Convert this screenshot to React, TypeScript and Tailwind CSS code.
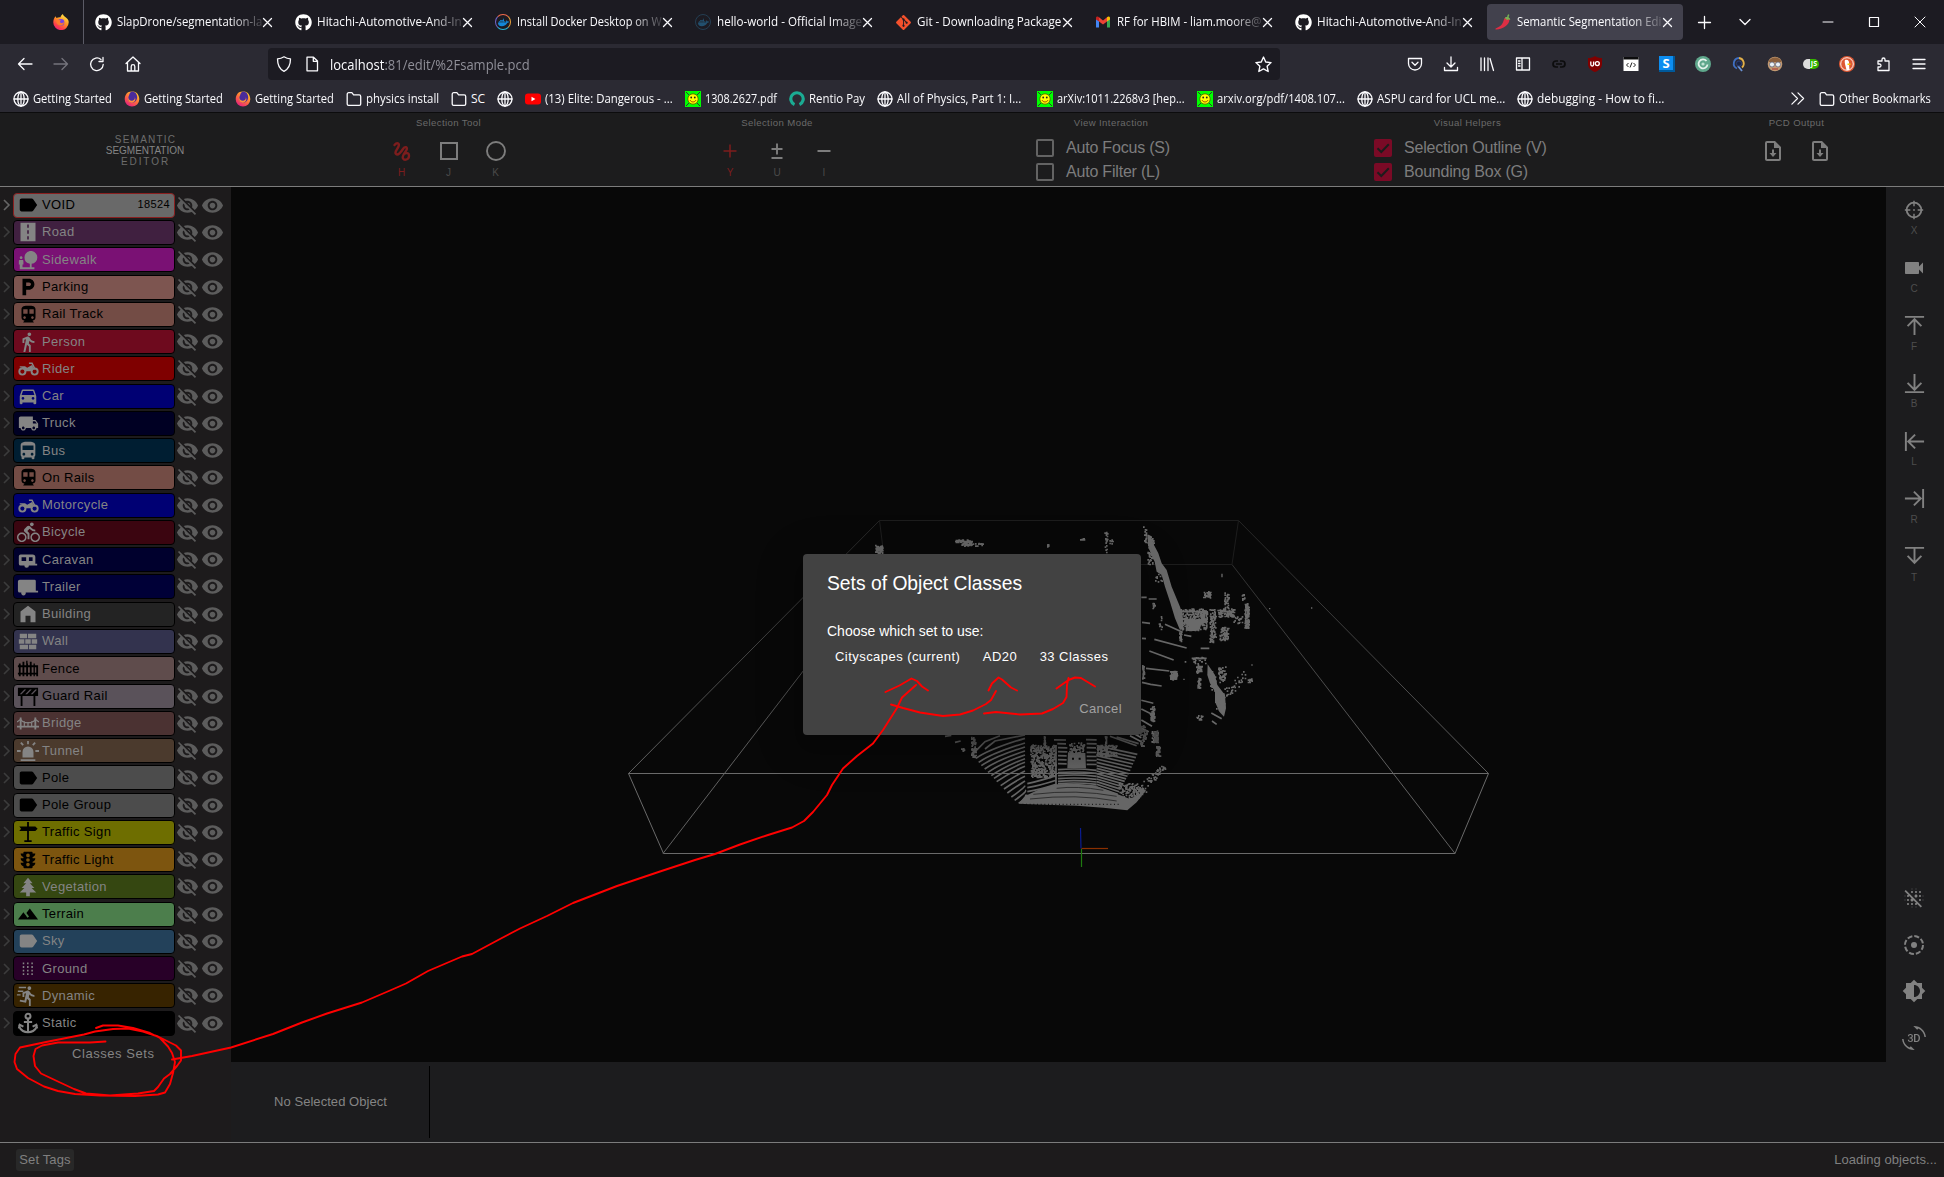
import React, { useLayoutEffect, useRef, useState } from 'react';
import { FaGithub, FaGitAlt, FaDocker } from 'react-icons/fa';
import {
  MdLabel, MdNaturePeople, MdLocalParking, MdDirectionsSubway, MdDirectionsWalk, MdDirectionsCar,
  MdLocalShipping, MdDirectionsBus, MdDirectionsBike, MdTraffic, MdTerrain, MdVisibility, MdVisibilityOff,
  MdVideocam, MdBlurOff, MdBrightness6, Md3dRotation, MdDirectionsRun,
} from 'react-icons/md';

/* ---------- helpers ---------- */

/** Text condensed horizontally to an exact width. */
function Fit({ w, children, className = '' }: { w: number; children: React.ReactNode; className?: string }) {
  const ref = useRef<HTMLSpanElement>(null);
  const [scale, setScale] = useState(1);
  useLayoutEffect(() => {
    if (ref.current) setScale(w / ref.current.offsetWidth);
  }, [w]);
  return (
    <span className={`block shrink-0 ${className}`} style={{ width: w }}>
      <span ref={ref} className="inline-block origin-left whitespace-nowrap" style={{ transform: `scaleX(${scale})` }}>
        {children}
      </span>
    </span>
  );
}

type IconProps = { className?: string; children?: React.ReactNode; box?: string };
const Solid = ({ className = 'size-5', children, box = '0 0 24 24' }: IconProps) => (
  <svg viewBox={box} className={`${className} shrink-0`} fill="currentColor">{children}</svg>
);
const Line = ({ className = 'size-4', children, box = '0 0 16 16' }: IconProps) => (
  <svg viewBox={box} className={`${className} shrink-0`} fill="none" stroke="currentColor" strokeWidth="1.3" strokeLinecap="round" strokeLinejoin="round">
    {children}
  </svg>
);

/* ---------- browser icons ---------- */

const Firefox = () => (
  <svg viewBox="0 0 16 16" className="size-4 shrink-0">
    <defs>
      <linearGradient id="ff" x1="0.8" y1="0" x2="0.2" y2="1">
        <stop offset="0" stopColor="#fff44f" />
        <stop offset="0.45" stopColor="#ff9024" />
        <stop offset="0.8" stopColor="#ff3750" />
        <stop offset="1" stopColor="#e0208a" />
      </linearGradient>
    </defs>
    <path d="M15.3 6.2C14.6 4.2 12.6 3.6 11 2 10.3 1.2 10 .6 9.9 0 8.6 .8 7.7 2.1 7.6 3.2 6 3 4.7 3.3 3.6 3.9 3.1 3.4 2.9 2.8 2.9 2.2 1.2 3.4 .3 5.8 .3 8.3A7.7 7.7 0 0 0 15.7 8.5c0-.8-.1-1.6-.4-2.3z" fill="url(#ff)" />
    <circle cx="8" cy="8.4" r="3.3" fill="#7543e3" />
    <path d="M3.5 6c1.5-.8 3 .2 4.500.5-1.300.5-1.400 1.600-.4 2.300 1.200.8 3 .2 3.500-1-.1 3-2.600 4.400-4.800 3.600C4 10.600 3 8.500 3.500 6z" fill="#ff7a2c" />
  </svg>
);
const FirefoxMark = () => (
  <svg viewBox="0 0 16 16" className="size-4 shrink-0">
    <defs>
      <linearGradient id="fm" x1="0.8" y1="0" x2="0.2" y2="1">
        <stop offset="0.1" stopColor="#ffbd2e" />
        <stop offset="0.5" stopColor="#ff7139" />
        <stop offset="1" stopColor="#e31587" />
      </linearGradient>
    </defs>
    <path d="M4 1.200C2 2.500.7 5.200.7 8.300a7.300 7.300 0 0 0 14.600 0c0-2.500-1-5-2.800-6.500C10.500.2 7 0 4 1.200z" fill="url(#fm)" />
    <path d="M5 4.500C5.500 2.500 6.500 1 8 .6c3 0 5.200 2.400 5.200 5.600 0 3-2.200 5.300-5 5.300S3.800 9.500 4.200 7c.1-1 .4-1.800.8-2.500z" fill="#4a2b9b" />
    <path d="M4.500 6c-.3 2.500 1.500 4 3.700 3.800 2-.2 3-1.800 2.600-3.500 1.500 2.500-.3 5.400-3 5.400-2.500 0-4.500-2.200-3.300-5.700z" fill="#ff8f3a" />
  </svg>
);
const Globe = () => (
  <Line><circle cx="8" cy="8" r="7" /><ellipse cx="8" cy="8" rx="3.2" ry="7" /><path d="M1 8h14M8 1v14" /></Line>
);
const Folder = () => (
  <Line><path d="M1.200 13V3.200c0-.9.6-1.500 1.500-1.500h3.200L7.600 3.900h5.600c.9 0 1.500.6 1.500 1.500V13c0 .8-.6 1.300-1.400 1.300H2.600c-.8 0-1.400-.5-1.400-1.300z" /></Line>
);
const YouTube = () => (
  <svg viewBox="0 0 16 16" className="size-4 shrink-0"><rect x="0" y="2.5" width="16" height="11" rx="3" fill="#f00" /><path d="M6.500 5.700v4.600L10.400 8z" fill="#fff" /></svg>
);
const Smiley = () => (
  <svg viewBox="0 0 16 16" className="size-4 shrink-0">
    <rect width="16" height="16" fill="#0f0" />
    <path d="M1 1l3 3M15 1l-3 3M1 15l3-3M15 15l-3-3" stroke="#333" strokeWidth="1" />
    <circle cx="8" cy="8" r="5.2" fill="#ff0" stroke="#555500" strokeWidth="0.8" />
    <circle cx="6.2" cy="6.5" r="0.9" fill="#222" /><circle cx="9.8" cy="6.5" r="0.9" fill="#222" />
    <path d="M5 9c1 2.600 5 2.600 6 0" stroke="#a40" fill="none" />
  </svg>
);
const Rentio = () => (
  <svg viewBox="0 0 16 16" className="size-4 shrink-0"><path d="M5.500 13.600A6.200 6.200 0 1 1 10.500 13.600" fill="none" stroke="#1bab93" strokeWidth="3.2" /></svg>
);
const Github = () => <FaGithub className="size-[17px] shrink-0 text-white" />;
const Docker = ({ dim }: { dim?: boolean }) => (
  <span className={`flex size-4 shrink-0 items-center justify-center rounded-full border ${dim ? 'border-[#243e52] text-[#22506e]' : 'border-t-[#f26a4b] border-r-[#e9a13b] border-b-[#29b6d8] border-l-[#7467c9] text-[#1488d8]'}`}>
    <FaDocker className="size-[11px]" />
  </span>
);
const Gmail = () => (
  <svg viewBox="0 0 16 16" className="size-4 shrink-0">
    <path d="M1 4v9.500h3V7z" fill="#4285f4" /><path d="M15 4v9.500h-3V7z" fill="#34a853" />
    <path d="M4 3.200L8 6.500l4-3.300V7.500L8 10.500 4 7.500z" fill="#ea4335" />
    <path d="M1 4c0-1.500 1.700-2 3-.8v4.300L1 5.500z" fill="#c5221f" /><path d="M15 4c0-1.500-1.700-2-3-.8v4.300l3-2z" fill="#fbbc04" />
  </svg>
);
const Chili = () => (
  <svg viewBox="0 0 16 16" className="size-4 shrink-0">
    <path d="M10.300 3.500c1.800-1 4 .3 4.100 2.300.1 4.500-6 9.700-13.300 9.800-.9-.1-.8-1.100 0-1.400C5 13 6.800 11 8 8.300c.8-1.800.8-3.600 2.300-4.800z" fill="#dd2e44" />
    <path d="M9.600 4.600c.6-1.300 1.700-1.700 2.600-1.500C12.300 2 12.500 1 13.300.3l1.200.7c-.7.7-.9 1.500-.8 2.400 1.200.5 1.600 1.500 1.400 2.700l-1.600-.8-1.600 1-.8-1.600z" fill="#77b255" />
  </svg>
);
const Close = () => <Line className="size-[11px]" box="0 0 11 11"><path d="M1.500 1.500l8 8M9.500 1.500l-8 8" /></Line>;

const tabs = [
  { icon: <Github />, t: 'SlapDrone/segmentation-la', w: 145 },
  { icon: <Github />, t: 'Hitachi-Automotive-And-In', w: 145 },
  { icon: <Docker />, t: 'Install Docker Desktop on W', w: 145 },
  { icon: <Docker dim />, t: 'hello-world - Official Image', w: 145 },
  { icon: <FaGitAlt className="size-[17px] shrink-0 text-[#f4512c]" />, t: 'Git - Downloading Package', w: 144, clear: true },
  { icon: <Gmail />, t: 'RF for HBIM - liam.moore@', w: 144 },
  { icon: <Github />, t: 'Hitachi-Automotive-And-In', w: 145 },
  { icon: <Chili />, t: 'Semantic Segmentation Edi', w: 144, active: true },
];

function TabStrip() {
  return (
    <div className="flex h-11 shrink-0 items-center bg-[#1c1b22] text-[13px] text-[#fbfbfe]">
      <div className="flex h-full w-[84px] shrink-0 items-center justify-end border-r border-[#5b5b66] pr-[14px]"><Firefox /></div>
      <div className="flex h-full pl-px">
        {tabs.map((tab, i) => (
          <div key={i} className="flex h-full w-[200px] items-center px-[2px]">
            <div className={`flex h-9 w-full items-center rounded-[4px] pl-2 ${tab.active ? 'bg-[#42414d]' : ''}`}>
              <span className="flex w-[22px] shrink-0 items-center">{tab.icon}</span>
              <div className={`w-[145px] ${tab.clear ? '' : '[mask-image:linear-gradient(to_right,#000_78%,rgba(0,0,0,0.15)_100%)]'}`}>
                <Fit w={tab.w}>{tab.t}</Fit>
              </div>
              <Close />
            </div>
          </div>
        ))}
      </div>
      <div className="flex w-[79px] justify-between pl-[12px] pr-[12px]">
        <Line className="size-[15px]" box="0 0 15 15"><path d="M7.500 1.500v12M1.500 7.500h12" /></Line>
        <Line className="size-[14px]" box="0 0 14 14"><path d="M2 4.500l5 5 5-5" /></Line>
      </div>
      <div className="ml-auto flex gap-[34px] pr-[18px]">
        <Line className="size-3" box="0 0 12 12"><path d="M1 6h10" strokeWidth="1" /></Line>
        <Line className="size-3" box="0 0 12 12"><path d="M1.500 1.500h9v9h-9z" strokeWidth="1.2" /></Line>
        <Line className="size-3" box="0 0 12 12"><path d="M1 1l10 10M11 1L1 11" strokeWidth="1" /></Line>
      </div>
    </div>
  );
}

const extensions = [
  <Line><path d="M1.500 2.500h13V7.500a6.500 6.500 0 0 1-13 0zM5 6.300l3 3 3-3" /></Line>,
  <Line><path d="M8 1v9.500M4 7l4 4 4-4M1.500 11.500v3h13v-3" /></Line>,
  <Line><path d="M2 2v12.500M5.500 2v12.500M9 2v12.500M11 2.500l3.500 12" /></Line>,
  <Line><path d="M1.500 2h13v12h-13zM7 2v12M3.500 5h1.500M3.500 7.500h1.500M3.500 10h1.500" /></Line>,
  <svg viewBox="0 0 16 16" className="size-4 text-[#0c0c0d]" fill="none" stroke="currentColor" strokeWidth="1.7"><path d="M7 5H5a3 3 0 0 0 0 6h2M9 5h2a3 3 0 0 1 0 6H9M5 8h6" /></svg>,
  <svg viewBox="0 0 16 16" className="size-4"><path d="M8 0c2 1.500 4 2 7 2v6c0 4-3 6.500-7 8-4-1.500-7-4-7-8V2c3 0 5-.5 7-2z" fill="#800000" /><path d="M3.800 5.500v3c0 2 2.800 2 2.800 0v-3" stroke="#fff" strokeWidth="1.3" fill="none" /><circle cx="10.3" cy="7.6" r="2" stroke="#fff" strokeWidth="1.3" fill="none" /></svg>,
  <svg viewBox="0 0 16 16" className="size-4"><rect x="0.5" y="1" width="15" height="14" fill="#fff" /><path d="M.5 1h15v2.500H.5z" fill="#0c0c0d" /><path d="M5.500 7L3.500 9l2 2M10.500 7l2 2-2 2M9 6.500l-2 5" stroke="#222" fill="none" /></svg>,
  <span className="flex size-4 items-center justify-center border-r-2 border-b-2 border-[#00599b] bg-[#0d8df0] text-[13px] font-bold leading-none text-white">S</span>,
  <svg viewBox="0 0 16 16" className="size-4"><circle cx="8" cy="8" r="8" fill="#5fa78c" /><path d="M11.500 5A4.500 4.500 0 1 0 12.500 8.500" stroke="#e6f4ee" strokeWidth="1.8" fill="none" /><circle cx="8" cy="8" r="1.6" fill="#bfe3d3" /></svg>,
  <svg viewBox="0 0 16 16" className="size-4" fill="none" strokeWidth="1.8"><path d="M8 2a5.500 5.500 0 0 0-2 10.500" stroke="#3f6fc2" /><path d="M8 2a5.500 5.500 0 0 1 3 9.500" stroke="#e2b04a" /><path d="M7 10l4 5" stroke="#6b93d6" /><circle cx="8" cy="7.5" r="2.5" fill="#1a2340" stroke="#2a3d77" strokeWidth="1" /></svg>,
  <svg viewBox="0 0 16 16" className="size-4"><circle cx="8" cy="8" r="7.3" fill="#c39a72" /><path d="M1.500 6C3 0 13 0 14.500 6z" fill="#8a5f3c" /><circle cx="5" cy="8.5" r="2.5" fill="#e8f0f5" stroke="#667" strokeWidth="0.8" /><circle cx="11" cy="8.5" r="2.5" fill="#e8f0f5" stroke="#667" strokeWidth="0.8" /><path d="M5 13h6" stroke="#a33" /></svg>,
  <span className="flex size-4 items-center"><span className="flex h-[10px] w-4 items-center justify-end rounded-full bg-linear-to-r from-[#ddd] from-45% to-[#35b500] to-45% pr-[2px] text-[7px] font-bold text-white">JS</span></span>,
  <svg viewBox="0 0 16 16" className="size-4"><circle cx="8" cy="8" r="8" fill="#de5833" /><circle cx="8" cy="8" r="6.3" fill="none" stroke="#fff" strokeWidth="0.9" /><path d="M6 4c3-1 4.500 1 4 4 0 2 .5 4 .5 6H7.500C7 11 5 6 6 4z" fill="#fff" /><path d="M8.500 7.500h3v1.500h-3z" fill="#fc0" /></svg>,
  <Line><path d="M3 14.500V11h1.500a1.500 1.500 0 0 0 0-3H3V5h4V3.500a1.500 1.500 0 0 1 3 0V5h4v9.500z" /></Line>,
  <Line><path d="M2 3.500h12M2 8h12M2 12.500h12" /></Line>,
];

function NavBar() {
  return (
    <div className="flex h-10 shrink-0 items-center text-[15px] text-[#fbfbfe]">
      <div className="flex w-[268px] items-center gap-5 pl-[17px]">
        <Line><path d="M15 8H1.500M7 2.500L1.500 8 7 13.500" /></Line>
        <Line className="size-4 text-[#75747d]"><path d="M1 8h13.500M9 2.500L14.500 8 9 13.500" /></Line>
        <Line><path d="M14.200 8.500A6.300 6.300 0 1 1 12 3.500M14 1.500v4h-4" /></Line>
        <Line><path d="M1 7.500L8 1l7 6.500M2.500 6.500V15h11V6.500M6.200 15v-4.500a1.800 1.800 0 0 1 3.600 0V15" /></Line>
      </div>
      <div className="flex h-8 w-[1012px] items-center rounded-[4px] bg-[#1c1b22] px-2">
        <Line><path d="M8 .8c2 1.400 4 2 6.500 2C14.500 9 13 13 8 15.300 3 13 1.500 9 1.500 2.800c2.500 0 4.500-.6 6.500-2z" /></Line>
        <span className="ml-3 flex"><Line><path d="M3 1.200h6.500L13.500 5v9.800H3zM9.300 1.500V5.300H13.300" /></Line></span>
        <Fit w={200} className="ml-[10px]"><span>localhost</span><span className="text-[#8f8f98]">:81/edit/%2Fsample.pcd</span></Fit>
        <span className="ml-auto"><Line className="size-[17px]"><path d="M8 1l2.100 4.600 5 .6-3.700 3.400 1 5L8 12.200l-4.400 2.400 1-5L.9 6.200l5-.6z" /></Line></span>
      </div>
      <div className="ml-auto flex gap-5 pr-[17px]">{extensions.map((e, i) => <span key={i} className="flex size-4 items-center justify-center">{e}</span>)}</div>
    </div>
  );
}

const bookmarks: [React.ReactNode, string, number][] = [
  [<Globe />, 'Getting Started', 79], [<FirefoxMark />, 'Getting Started', 79], [<FirefoxMark />, 'Getting Started', 79],
  [<Folder />, 'physics install', 73], [<Folder />, 'SC', 14], [<Globe />, '', 0],
  [<YouTube />, '(13) Elite: Dangerous - ...', 128], [<Smiley />, '1308.2627.pdf', 72], [<Rentio />, 'Rentio Pay', 56],
  [<Globe />, 'All of Physics, Part 1: I...', 124], [<Smiley />, 'arXiv:1011.2268v3 [hep...', 128],
  [<Smiley />, 'arxiv.org/pdf/1408.107...', 128], [<Globe />, 'ASPU card for UCL me...', 128], [<Globe />, 'debugging - How to fi...', 127],
];

function Bookmarks() {
  return (
    <div className="flex h-7 shrink-0 items-center pl-[13px] pt-px text-[12px] text-[#fbfbfe]">
      <div className="flex items-center gap-3">
        {bookmarks.map(([icon, t, w], i) => (
          <div key={i} className={`flex items-center gap-1 ${w === 124 ? 'pr-1' : ''}`}>{icon}{t && <Fit w={w}>{t}</Fit>}</div>
        ))}
      </div>
      <div className="ml-auto flex items-center pr-[13px]">
        <Line className="size-[15px] mr-[14px]"><path d="M2 2l6 6-6 6M8.500 2l6 6-6 6" /></Line>
        <Folder />
        <Fit w={92} className="ml-1">Other Bookmarks</Fit>
      </div>
    </div>
  );
}

/* ---------- editor header ---------- */

const Group = ({ title, width, children }: { title: string; width: string; children: React.ReactNode }) => (
  <div className={`flex shrink-0 flex-col items-center ${width}`}>
    <div className="h-[20px] pt-[3px] text-[9.6px] leading-[14px] tracking-[0.4px] text-[#6a6a6a]">{title}</div>
    {children}
  </div>
);
const Tool = ({ k, red, children }: { k: string; red?: boolean; children: React.ReactNode }) => (
  <div className={`flex w-[47px] flex-col items-center pt-[6px] ${red ? 'text-[#7d1d1d]' : 'text-[#7d7d7d]'}`}>
    {children}
    <span className={`mt-[4px] text-[10px] leading-[12px] ${red ? '' : 'text-[#4a4a4a]'}`}>{k}</span>
  </div>
);
const Check = ({ on, label }: { on?: boolean; label: string }) => (
  <div className="flex h-6 items-center gap-3 text-[16px] text-[#7d7d7d]">
    {on ? (
      <svg viewBox="0 0 18 18" className="size-[18px]"><rect width="18" height="18" rx="2" fill="#7a0a26" /><path d="M3.500 9.200l3.800 3.800 7.500-7.800" stroke="#1c1c1c" strokeWidth="2" fill="none" /></svg>
    ) : <span className="size-[18px] rounded-[2px] border-2 border-[#636363]" />}
    <span className="whitespace-nowrap leading-none tracking-[-0.2px]">{label}</span>
  </div>
);
const FileDown = () => (
  <Solid className="size-6"><path fillRule="evenodd" d="M14 2H6a2 2 0 0 0-2 2v16c0 1.100.9 2 2 2h12a2 2 0 0 0 2-2V8zM6 4h7v5h5v11H6zM11 10.500h2V14h2.500L12 18l-3.500-4H11z" /></Solid>
);

function Header() {
  return (
    <div className="flex h-[74px] shrink-0 border-b border-[#7c7c7c] bg-[#1c1c1d]">
      <div className="flex w-[290px] shrink-0 flex-col items-center pt-[21px] text-[10px] leading-[11px] text-[#6c6c6c]">
        <span className="pl-px tracking-[1.2px]">SEMANTIC</span>
        <span className="text-[#858585]">SEGMENTATION</span>
        <span className="pl-px tracking-[1.9px]">EDITOR</span>
      </div>
      <Group title="Selection Tool" width="w-[317px]">
        <div className="flex">
          <Tool k="H" red>
            <svg viewBox="0 0 24 24" className="size-6" fill="none" stroke="currentColor" strokeWidth="2.4" strokeLinecap="round"><path d="M4.500 6C7 3 10 4 8.500 7.500S4 13 6 15s5-2 7-5 5-2 3.500 1-5 6-3.500 8.500 6 1 6-2.500-2.500-3.500-5-2" /></svg>
          </Tool>
          <Tool k="J"><svg viewBox="0 0 24 24" className="size-6" fill="none" stroke="currentColor" strokeWidth="2"><path d="M4 4h16v16H4z" /></svg></Tool>
          <Tool k="K"><svg viewBox="0 0 24 24" className="size-6" fill="none" stroke="currentColor" strokeWidth="1.9"><circle cx="12" cy="12" r="9" /></svg></Tool>
        </div>
      </Group>
      <Group title="Selection Mode" width="w-[340px]">
        <div className="flex">
          <Tool k="Y" red><svg viewBox="0 0 24 24" className="size-6" fill="none" stroke="currentColor" strokeWidth="1.5"><path d="M12 5.500v13M5.500 12h13" /></svg></Tool>
          <Tool k="U"><svg viewBox="0 0 24 24" className="size-6" fill="none" stroke="currentColor" strokeWidth="1.9"><path d="M12 4.500v11M6.500 10h11M6.500 19h11" /></svg></Tool>
          <Tool k="I"><svg viewBox="0 0 24 24" className="size-6" fill="none" stroke="currentColor" strokeWidth="2"><path d="M5.500 12h13" /></svg></Tool>
        </div>
      </Group>
      <Group title="View Interaction" width="w-[328px]">
        <div className="mt-[3px] w-[150px]"><Check label="Auto Focus (S)" /><Check label="Auto Filter (L)" /></div>
      </Group>
      <Group title="Visual Helpers" width="w-[385px]">
        <div className="mt-[3px] w-[187px]"><Check on label="Selection Outline (V)" /><Check on label="Bounding Box (G)" /></div>
      </Group>
      <Group title="PCD Output" width="w-[273px]">
        <div className="flex gap-[23px] pt-[6px] text-[#7d7d7d]"><FileDown /><FileDown /></div>
      </Group>
    </div>
  );
}

/* ---------- class list ---------- */

const Rail = () => <MdDirectionsSubway className="size-[21px]" />;
const Moto = () => (
  <svg viewBox="0 0 24 24" className="size-[21px]" fill="none" stroke="currentColor" strokeWidth="2.2">
    <circle cx="5" cy="15.5" r="3.5" /><circle cx="19" cy="15.5" r="3.5" />
    <path d="M12.500 6H16l3.500 7" strokeWidth="1.8" />
    <path d="M2 9.500h6l2.500 1.500L16 8l1.500 2.500-3 4.500H8.500L7.500 12 2 10.500z" fill="currentColor" stroke="none" />
  </svg>
);
const Tag = () => <MdLabel className="size-[22px]" />;

const classes: { n: string; bg: string; dark?: boolean; icon: React.ReactNode; count?: string }[] = [
  { n: 'VOID', bg: 'bg-[#696969]', dark: true, icon: <Tag />, count: '18524' },
  { n: 'Road', bg: 'bg-[#402040]', icon: <Solid><path fillRule="evenodd" d="M3 1h18v22H3zM11 3v4h2V3zm0 7v4h2v-4zm0 7v4h2v-4z" /></Solid> },
  { n: 'Sidewalk', bg: 'bg-[#7a1174]', icon: <MdNaturePeople className="size-[22px]" /> },
  { n: 'Parking', bg: 'bg-[#7d5550]', dark: true, icon: <MdLocalParking className="size-[22px]" /> },
  { n: 'Rail Track', bg: 'bg-[#734c45]', dark: true, icon: <Rail /> },
  { n: 'Person', bg: 'bg-[#6e0a1e]', icon: <MdDirectionsWalk className="size-[22px]" /> },
  { n: 'Rider', bg: 'bg-[#7f0000]', icon: <Moto /> },
  { n: 'Car', bg: 'bg-[#000073]', icon: <MdDirectionsCar className="size-[22px]" /> },
  { n: 'Truck', bg: 'bg-[#000023]', icon: <MdLocalShipping className="size-[21px]" /> },
  { n: 'Bus', bg: 'bg-[#001e32]', icon: <MdDirectionsBus className="size-[22px]" /> },
  { n: 'On Rails', bg: 'bg-[#734c45]', dark: true, icon: <Rail /> },
  { n: 'Motorcycle', bg: 'bg-[#000073]', icon: <Moto /> },
  { n: 'Bicycle', bg: 'bg-[#3b0510]', icon: <MdDirectionsBike className="size-[23px]" /> },
  { n: 'Caravan', bg: 'bg-[#00002d]', icon: <Solid className="size-[22px]"><path fillRule="evenodd" d="M4 6h13a3 3 0 0 1 3 3v7h2v2H13a2.500 2.500 0 0 1-5 0H4a2 2 0 0 1-2-2V8a2 2 0 0 1 2-2zm1 3v4h5V9zm8 0v4h4V9z" /></Solid> },
  { n: 'Trailer', bg: 'bg-[#000037]', icon: <Solid className="size-[22px]"><path d="M3 4h16a1.500 1.500 0 0 1 1.500 1.500V16H23v2H9.500a2.500 2.500 0 1 1-4.800 0H3a2 2 0 0 1-2-2V6a2 2 0 0 1 2-2z" /></Solid> },
  { n: 'Building', bg: 'bg-[#232323]', icon: <Solid><path d="M3 22V9l9-7 9 7v13h-6v-8H9v8z" /></Solid> },
  { n: 'Wall', bg: 'bg-[#33334e]', icon: <Solid className="size-[22px]"><path d="M3 16h9v5H3zM2 10h6v5H2zM9 10h6v5H9zM16 10h6v5h-6zM13 16h8v5h-8zM3 4h8v5H3zM12 4h9v5h-9z" /></Solid> },
  { n: 'Fence', bg: 'bg-[#5f4c4c]', dark: true, icon: <Solid className="size-[22px]"><path d="M1 8h22v2H1zM1 16h22v2H1zM2 6h2v14H2zM6 4h2v16H6zM10 6h2v14h-2zM14 4h2v16h-2zM18 6h1.500v14H18zM21 8h2v12h-2zM10 3h1.500v4H10z" /></Solid> },
  { n: 'Guard Rail', bg: 'bg-[#5a525a]', dark: true, icon: <Solid className="size-[22px]"><path fillRule="evenodd" d="M1 3h22v9H20v11h-2V12H6v11H4V12H1zM3 10l5-5h2l-5 5zm6 0l5-5h2l-5 5zm6 0l5-5h1.500v.5L17 10z" /></Solid> },
  { n: 'Bridge', bg: 'bg-[#4b3232]', icon: <svg viewBox="0 0 24 24" className="size-[22px]" fill="none" stroke="currentColor" strokeWidth="2"><path d="M0 16h24M4 6v13M20 6v13" /><path d="M0 11l4-3c3 5 13 5 16 0l4 3M8 10v6M12 11v5M16 10v6" strokeWidth="1.3" /></svg> },
  { n: 'Tunnel', bg: 'bg-[#4b3a2d]', icon: <Solid className="size-[22px]"><path d="M6 19v-6a6 6 0 0 1 12 0v6zM4 21h16v2H4zM11 1h2v3.500h-2zM3.500 3.500l1.400-1.400L7.500 4.800 6 6.200zM20.500 3.500l-1.400-1.400-2.600 2.700L18 6.200zM0 11h4v2H0zM20 11h4v2h-4z" /></Solid> },
  { n: 'Pole', bg: 'bg-[#4c4c4c]', dark: true, icon: <Tag /> },
  { n: 'Pole Group', bg: 'bg-[#4c4c4c]', dark: true, icon: <Tag /> },
  { n: 'Traffic Sign', bg: 'bg-[#6e6e00]', dark: true, icon: <Solid className="size-[22px]"><path d="M11 1h2v5h7l2.500 2.500L20 11h-7v10h3v2H8v-2h3V11H2.500L4.500 8.500 2.500 6H11z" /></Solid> },
  { n: 'Traffic Light', bg: 'bg-[#7d550f]', dark: true, icon: <MdTraffic className="size-[22px]" /> },
  { n: 'Vegetation', bg: 'bg-[#354711]', icon: <Solid className="size-[22px]"><path d="M10 22v-4H3l5-5H5l5-5H7l5-6 5 6h-3l5 5h-3l5 5h-7v4z" /></Solid> },
  { n: 'Terrain', bg: 'bg-[#4c7e4c]', dark: true, icon: <MdTerrain className="size-[22px]" /> },
  { n: 'Sky', bg: 'bg-[#23415a]', icon: <Tag /> },
  { n: 'Ground', bg: 'bg-[#280028]', icon: <svg viewBox="0 0 20 20" className="size-5" stroke="currentColor" strokeWidth="1.5" strokeDasharray="1.8 1.8"><path d="M5.500 3.500v14M9.800 3.500v14M14.100 3.500v14" /></svg> },
  { n: 'Dynamic', bg: 'bg-[#372300]', icon: <span className="relative flex"><MdDirectionsRun className="size-[22px]" /><Solid className="absolute -left-[1px] top-0 size-[22px]"><path d="M3 2h8v1.500H3zM2 6h6v1.500H2zM1 10h4v1.500H1z" /></Solid></span> },
  { n: 'Static', bg: 'bg-[#000000]', icon: <svg viewBox="0 0 24 24" className="size-[22px]" fill="none" stroke="currentColor" strokeWidth="2.2"><circle cx="12" cy="4.5" r="2.7" /><path d="M12 7v15M7.500 11h9M2.500 14v2.500c2 3.500 5.500 5.500 9.500 5.500s7.500-2 9.500-5.500V14M2 18l1-4 4 2M22 18l-1-4-4 2" /></svg> },
];

function Sidebar() {
  return (
    <div className="flex w-[231px] shrink-0 flex-col bg-[#1d1b1c] pt-[4.6px]">
      {classes.map((c, i) => (
        <div key={c.n} className="flex h-[27.27px] shrink-0 items-center">
          <svg viewBox="0 0 8 12" className={`ml-[3px] h-3 w-2 ${i === 0 ? 'text-[#666]' : 'text-[#3c3c3c]'}`} fill="none" stroke="currentColor" strokeWidth="1.6"><path d="M1 1l5 5-5 5" /></svg>
          <div className={`ml-[2px] flex h-[25px] w-[162px] items-center rounded-[4px] border ${i === 0 ? 'border-[#8a1f1f]' : 'border-black'} ${c.bg} ${c.dark ? 'text-black' : 'text-[#848484]'}`}>
            <span className="ml-[2px] flex w-[24px] shrink-0 items-center justify-center">{c.icon}</span>
            <span className="ml-[2px] pb-px text-[13px] leading-none tracking-[0.35px]">{c.n}</span>
            {c.count && <span className="ml-auto pr-[4px] pb-px text-[11px] tracking-[0.4px]">{c.count}</span>}
          </div>
          <MdVisibilityOff className="ml-[1px] size-[23px] text-[#5c5c5c]" />
          <MdVisibility className="ml-[2px] size-[23px] text-[#5c5c5c]" />
        </div>
      ))}
      <div className="mt-[7px] pl-[72px] text-[13px] tracking-[0.55px] text-[#848484]">Classes Sets</div>
    </div>
  );
}

/* ---------- point cloud ---------- */

function scatter(seed: number, poly: [number, number][], count: number, size = 5) {
  let s = seed * 7919;
  const rnd = () => { s = (s * 16807) % 2147483647; return s / 2147483647; };
  const xs = poly.map((p) => p[0]);
  const ys = poly.map((p) => p[1]);
  const x0 = Math.min(...xs), x1 = Math.max(...xs), y0 = Math.min(...ys), y1 = Math.max(...ys);
  let d = '';
  for (let i = 0; i < count; i++) {
    const x = x0 + rnd() * (x1 - x0);
    const y = y0 + rnd() * (y1 - y0);
    let inside = false;
    for (let a = 0, b = poly.length - 1; a < poly.length; b = a++) {
      if (poly[a][1] > y !== poly[b][1] > y && x < ((poly[b][0] - poly[a][0]) * (y - poly[a][1])) / (poly[b][1] - poly[a][1]) + poly[a][0]) inside = !inside;
    }
    if (inside) d += `M${x.toFixed(0)} ${y.toFixed(0)}h${size}v${size}h-${size}z`;
  }
  return d;
}
const rect = (x: number, y: number, w: number, h: number): [number, number][] => [[x, y], [x + w, y], [x + w, y + h], [x, y + h]];

const farScatter = [
  scatter(7, rect(38, 28, 10, 56), 16), scatter(11, rect(52, 62, 18, 86), 60), scatter(13, rect(150, 280, 78, 62), 260),
  scatter(17, rect(165, 312, 40, 32), 200), scatter(19, rect(238, 280, 18, 100), 100), scatter(23, rect(262, 280, 50, 24), 80),
  scatter(29, rect(282, 230, 14, 50), 30), scatter(31, rect(268, 335, 26, 40), 70), scatter(37, rect(218, 226, 22, 20), 28),
  scatter(41, rect(343, 264, 12, 74), 130), scatter(43, rect(308, 300, 28, 24), 20), scatter(47, rect(188, 424, 38, 20), 22),
  scatter(53, rect(198, 448, 16, 24), 40), scatter(59, rect(202, 486, 8, 32), 30), scatter(61, rect(264, 450, 22, 48), 44),
  scatter(67, [[285, 520], [345, 460], [345, 500], [290, 548]], 80), scatter(71, rect(352, 490, 14, 10), 10),
  scatter(73, rect(118, 466, 22, 26), 70), scatter(79, rect(196, 600, 22, 12), 12), scatter(83, rect(60, 572, 12, 48), 44),
  scatter(89, rect(64, 646, 18, 34), 60), scatter(97, rect(75, 175, 20, 24), 10), scatter(101, rect(66, 262, 8, 18), 8),
  scatter(103, rect(84, 300, 12, 42), 10), scatter(107, rect(36, 448, 5, 42), 34), scatter(109, rect(145, 345, 8, 32), 24),
  scatter(113, rect(335, 236, 7, 18), 8), scatter(127, rect(212, 284, 18, 44), 60), scatter(131, [[230, 450], [262, 480], [296, 540], [290, 560], [262, 600], [250, 540], [230, 500]], 90),
].join('');
const nearScatter = [
  scatter(3, rect(300, 58, 76, 98), 420), scatter(5, rect(122, 35, 14, 60), 70), scatter(9, rect(412, 52, 50, 36), 80),
  scatter(15, rect(498, 58, 60, 34), 120), scatter(21, [[565, 170], [640, 175], [650, 200], [600, 235], [560, 195]], 190),
  scatter(25, [[610, 190], [640, 165], [712, 105], [718, 118], [660, 185], [620, 215]], 240), scatter(33, rect(670, 15, 12, 36), 50),
  scatter(35, rect(676, 62, 14, 30), 36), scatter(39, [[630, 0], [655, 0], [640, 62], [628, 62]], 90), scatter(45, rect(90, 68, 12, 8), 8),
  scatter(49, rect(340, 32, 4, 28), 24), scatter(51, rect(524, 32, 4, 34), 30),
].join('');
const upperScatter = [
  scatter(2, rect(525, 88, 50, 8), 60), scatter(4, rect(540, 98, 68, 8), 40), scatter(6, rect(284, 100, 8, 24), 14),
  scatter(8, rect(290, 106, 16, 22), 40), scatter(10, rect(973, 45, 8, 84), 18), scatter(12, rect(800, 101, 4, 7), 12),
  scatter(14, rect(900, 84, 12, 4), 12), scatter(16, rect(985, 88, 12, 12), 6),
].join('');

const leftArcs: [number, number, number][] = [
  [138, 100, 40], [146, 112, 54], [154, 122, 66], [164, 132, 78], [174, 142, 90], [184, 152, 101], [192, 160, 112], [200, 170, 124],
  [212, 182, 138], [222, 192, 154], [232, 204, 168], [244, 216, 182], [254, 226, 196], [266, 235, 212],
];
const midRows = [134, 143, 152, 161, 169, 176, 182, 188, 194, 200];
const rightRows = [62, 72, 82, 92, 102, 112, 122, 130, 138, 146, 154, 162, 170, 178, 186];

function Viewport() {
  return (
    <svg viewBox="231 187 1655 875" className="h-full w-full">
      <defs>
        <linearGradient id="depth" gradientUnits="userSpaceOnUse" x1="0" y1="520" x2="0" y2="770">
          <stop offset="0" stopColor="#232323" /><stop offset="1" stopColor="#606060" />
        </linearGradient>
        <linearGradient id="shade" gradientUnits="userSpaceOnUse" x1="0" y1="20" x2="0" y2="150">
          <stop offset="0" stopColor="#4a4a4a" /><stop offset="1" stopColor="#666666" />
        </linearGradient>
      </defs>
      <g fill="none" stroke="url(#depth)" strokeWidth="1">
        <path d="M628.500 773.500L879.500 520.500M663 853.500L885 564.500M1488.500 773.500L1238.500 520.500M1455 853.500L1232 564.500" />
        <path d="M879.500 520.500L885 564.500H1232L1238.500 520.500" stroke="#1d1d1d" />
        <path d="M879.500 520.500H1238.500" stroke="#1d1d1d" />
        <path d="M628.500 773.500L663.500 853.500H1455L1488.500 773.500" stroke="#6a6a6a" />
        <path d="M628.500 773.500H1488.500" stroke="#6a6a6a" />
      </g>
      <g transform="translate(780 510) scale(.3333)" fill="#666"><path d={upperScatter} /></g>
      <g transform="translate(1130 515) scale(.3333)" fill="#6a6a6a">
        <path d="M52 58L62 62 72 90 85 115 95 145 110 165 125 215 150 275 158 300 160 340 150 345 135 310 120 260 105 215 95 180 80 170 74 140 64 120 54 90Z" />
        <path d="M233 448L255 480 262 510 285 540 288 580 282 605 268 590 255 560 255 530 240 505 232 480Z" />
        <path d={farScatter} />
        <path d="M417 279h4v4h-4zM543 277h4v4h-4zM364 448h4v4h-4zM160 491h4v4h-4zM274 176h4v11h-4zM164 438h5v5h-5z" />
        <path d="M105 328L158 352M162 360L184 364M73 373L170 399M58 408L131 435M48 460L118 468M36 502L62 508 95 513M212 400H238M34 247H50M56 252H80M36 322L60 325M36 370L48 371M34 556L70 565M34 582L60 595 72 618M34 615L66 634M34 640L56 650M244 594L275 611M246 618L260 628M280 290H312M150 290H230M185 430H230M0 662L34 680M10 655L34 668" fill="none" stroke="#6a6a6a" strokeWidth="5" />
      </g>
      <g transform="translate(930 725) scale(.3333)" fill="url(#shade)">
        <path d={nearScatter} />
        <path d="M414 84L466 84 468 130 412 130Z" />
        <path d="M284 214L330 192 380 178 440 176 500 184 560 206 600 222 648 196 620 232 592 256 520 248 440 242 300 238 266 236Z" fill="#666666" />
        <g fill="none" stroke="url(#shade)" strokeWidth="5">
          {leftArcs.map(([x, y, e], i) => <path key={i} d={`M${x} ${y}Q${x + 40} ${y - 28} 285 ${e}`} />)}
          <path d="M130 85L165 50 210 32M165 72L195 48 285 30M45 34L64 31M75 52L92 48" />
          <path d="M372 44.500l36 .5M382 56l26 .5M384 68l28 .5M384 80l28 .5M384 92l26 .5M384 104l26 .5M384 116l26 .5M468 44l32 .5M470 56l30 .5M470 68l28 .5M470 82l28 .5M470 94l30 .5M470 106l30 .5M470 118l30 .5M540 34L620 62M560 36L626 56" />
          {midRows.map((y) => <path key={y} d={`M384 ${y}Q440 ${y - 5} 500 ${y + 2}`} />)}
          {rightRows.map((y, i) => <path key={y} d={`M500 ${y}L${622 - i * 4.2} ${y + 26 - i * 0.3}`} />)}
          <path d="M292 176Q330 168 378 152M292 188Q330 182 378 166M292 200Q330 194 378 178M378 60V200" />
        </g>
        <g fill="none" stroke="#141414" strokeWidth="2"><path d="M300 222Q440 206 560 228M310 208Q440 192 560 214M380 190Q440 182 520 196" /></g>
        <path d="M426 98h6v6h-6zM446 98h6v6h-6z" fill="#080808" />
        <path d="M266 238h300" stroke="#080808" strokeWidth="3" strokeDasharray="3 8" />
      </g>
      <g fill="none" strokeWidth="1.2">
        <path d="M1081 848.500L1080.500 828" stroke="#0a1c90" /><path d="M1081.500 848.500H1108" stroke="#8a3000" /><path d="M1081.500 849V867" stroke="#1e7a10" />
      </g>
    </svg>
  );
}

/* ---------- right rail ---------- */

const Collapse = ({ turn = '' }: { turn?: string }) => (
  <Solid className={`size-[23px] ${turn}`}><path d="M4.080 11.920L12 4l7.920 7.920-1.420 1.410-5.500-5.500V22h-2V7.830l-5.500 5.500zM2 2h20v2H2z" /></Solid>
);
const views: [React.ReactNode, string][] = [
  [<svg viewBox="0 0 24 24" className="size-[22px]" fill="none" stroke="currentColor" strokeWidth="2"><circle cx="12" cy="12" r="8" /><path d="M12 2v6M12 16v6M2 12h6M16 12h6M11 12h2" strokeWidth="1.6" /></svg>, 'X'],
  [<MdVideocam className="size-6" />, 'C'],
  [<Collapse />, 'F'],
  [<Collapse turn="rotate-180" />, 'B'],
  [<Collapse turn="-rotate-90" />, 'L'],
  [<Collapse turn="rotate-90" />, 'R'],
  [<Solid className="size-[23px]"><path d="M2 2h20v2h-9v12.200l5.500-5.500 1.400 1.400L12 20l-7.900-7.900 1.400-1.400 5.500 5.500V4H2z" /></Solid>, 'T'],
];

function RightRail() {
  return (
    <div className="flex w-[58px] shrink-0 flex-col items-center justify-between bg-[#1c1c1e] pt-[11px] pr-[2px] pb-[12px] text-[#818181]">
      <div className="flex flex-col">
        {views.map(([icon, k]) => (
          <div key={k} className="flex h-[57.8px] flex-col items-center">
            <span className="flex h-6 items-center">{icon}</span>
            <span className="mt-[3px] text-[10px] leading-[12px] text-[#4d4d4d]">{k}</span>
          </div>
        ))}
      </div>
      <div className="flex flex-col items-center gap-[22.6px]">
        <MdBlurOff className="size-6" />
        <svg viewBox="0 0 24 24" className="size-6" fill="none" stroke="currentColor" strokeWidth="2"><circle cx="12" cy="12" r="9" strokeDasharray="5.07 2" /><circle cx="12" cy="12" r="3" fill="currentColor" stroke="none" /></svg>
        <MdBrightness6 className="size-6" />
        <Md3dRotation className="size-6" />
      </div>
    </div>
  );
}

/* ---------- overlays ---------- */

function Dialog() {
  return (
    <div className="absolute left-[803px] top-[554px] h-[181px] w-[338px] rounded-[4px] bg-[#424242] px-6 text-white shadow-[0_11px_15px_-7px_rgba(0,0,0,0.2),0_9px_46px_8px_rgba(0,0,0,0.12)]">
      <h2 className="pt-[18px] text-[19.3px] leading-6">Sets of Object Classes</h2>
      <p className="mt-[27px] text-[14px] leading-4">Choose which set to use:</p>
      <div className="mt-[10px] flex gap-[22.5px] pl-2 text-[13px] leading-4 tracking-[0.45px]">
        <span>Cityscapes (current)</span><span>AD20</span><span>33 Classes</span>
      </div>
      <div className="-mr-[5px] mt-[36px] text-right text-[13px] leading-4 tracking-[0.4px] text-[#a1a1a1]">Cancel</div>
    </div>
  );
}

function Annotations() {
  return (
    <svg viewBox="0 0 1944 1177" className="pointer-events-none absolute inset-0 h-full w-full" fill="none" stroke="#f00" strokeWidth="1.9" strokeLinejoin="round" strokeLinecap="round">
      <path d="M172 1059.500L192 1056 231 1047.500 273 1034 302 1022.500 327 1013.500 362 1002.500 390 990.500 406 983.500 428 971 462 956.500 472 954 500 939 520 928.500 547 916 573 903 617 886 660 871.500 695 860 715 854 740 844.500 768 835 792 827.500 804 821 813 812 827 795 832 785 843 768.500 857 756 873 743.500 883 730 897 708 902 697.500 916 685" />
      <path d="M885.500 692L899.500 685.500 911.500 678.500 917 681 922 686.500 928 690.500M891 704.500L903 708 920 712.500 943 716 960 714.500 973 710.500 986 704 991 700 996 691M988.500 690.500L992 683.500 998.500 677.500 1002 679.500 1011 687.500 1017 690.500" />
      <path d="M984 713.500L996 712 1020 714.500 1042 713.500 1053 709 1063 703 1066.500 697 1067 685 1068.500 678M1056.500 688.500L1068.500 680 1075 677.500 1081 678 1095 686.500" />
      <path d="M105.500 1041.500L90 1042.500 58 1042.500 42 1045.500 35.500 1049 33.500 1056 35 1066 41 1073.500 59 1082 74 1089 86 1093.500 110 1095.500 138 1093.500 154 1091 158 1087 164 1078.500 170 1074 177 1066 181 1060.500 181 1050.500 176 1045.500 168 1041.500 158 1036.500 143 1031.500 128 1028.500 113 1029 95 1031.500 84 1034.500 46 1042 20 1047.500 15.500 1054 14.500 1062 17 1069 28 1078 44 1086.500 58 1091 75 1094 100 1095.500 135 1096 158 1094.500 165 1092.500 170 1084 173 1073 175 1062 172 1053 168 1046.500 160 1038 150 1033 133 1028 118 1025.500 103 1025.500 96 1028" />
    </svg>
  );
}

export default function App() {
  return (
    <div className="relative flex h-[1177px] w-[1944px] flex-col overflow-hidden bg-[#1c1c1d] font-['Liberation_Sans',Arial,sans-serif]">
      <div className="flex h-[113px] shrink-0 flex-col border-b border-[#0c0c0d] bg-[#2b2a33] font-['Open_Sans','Noto_Sans',sans-serif]">
        <TabStrip />
        <NavBar />
        <Bookmarks />
      </div>
      <Header />
      <div className="flex min-h-0 flex-1">
        <Sidebar />
        <div className="flex min-w-0 flex-1 flex-col">
          <div className="flex h-[875px] shrink-0">
            <div className="min-w-0 flex-1 bg-[#080808]"><Viewport /></div>
            <RightRail />
          </div>
          <div className="flex flex-1 bg-[#1c1c1e] py-[4px]">
            <div className="flex w-[199px] items-center justify-center border-r border-black pl-px text-[13px] tracking-[0.05px] text-[#848484]">No Selected Object</div>
          </div>
        </div>
      </div>
      <div className="flex h-[35px] shrink-0 items-center justify-between border-t border-[#7c7c7c] bg-[#1d1b1c] pl-4 pr-[7px] text-[13px] text-[#808080]">
        <span className="flex h-[22px] w-[58px] items-center justify-center rounded-[3px] bg-[#282828] tracking-[0.15px]">Set Tags</span>
        <span className="tracking-[0.05px]">Loading objects...</span>
      </div>
      <Dialog />
      <Annotations />
    </div>
  );
}
